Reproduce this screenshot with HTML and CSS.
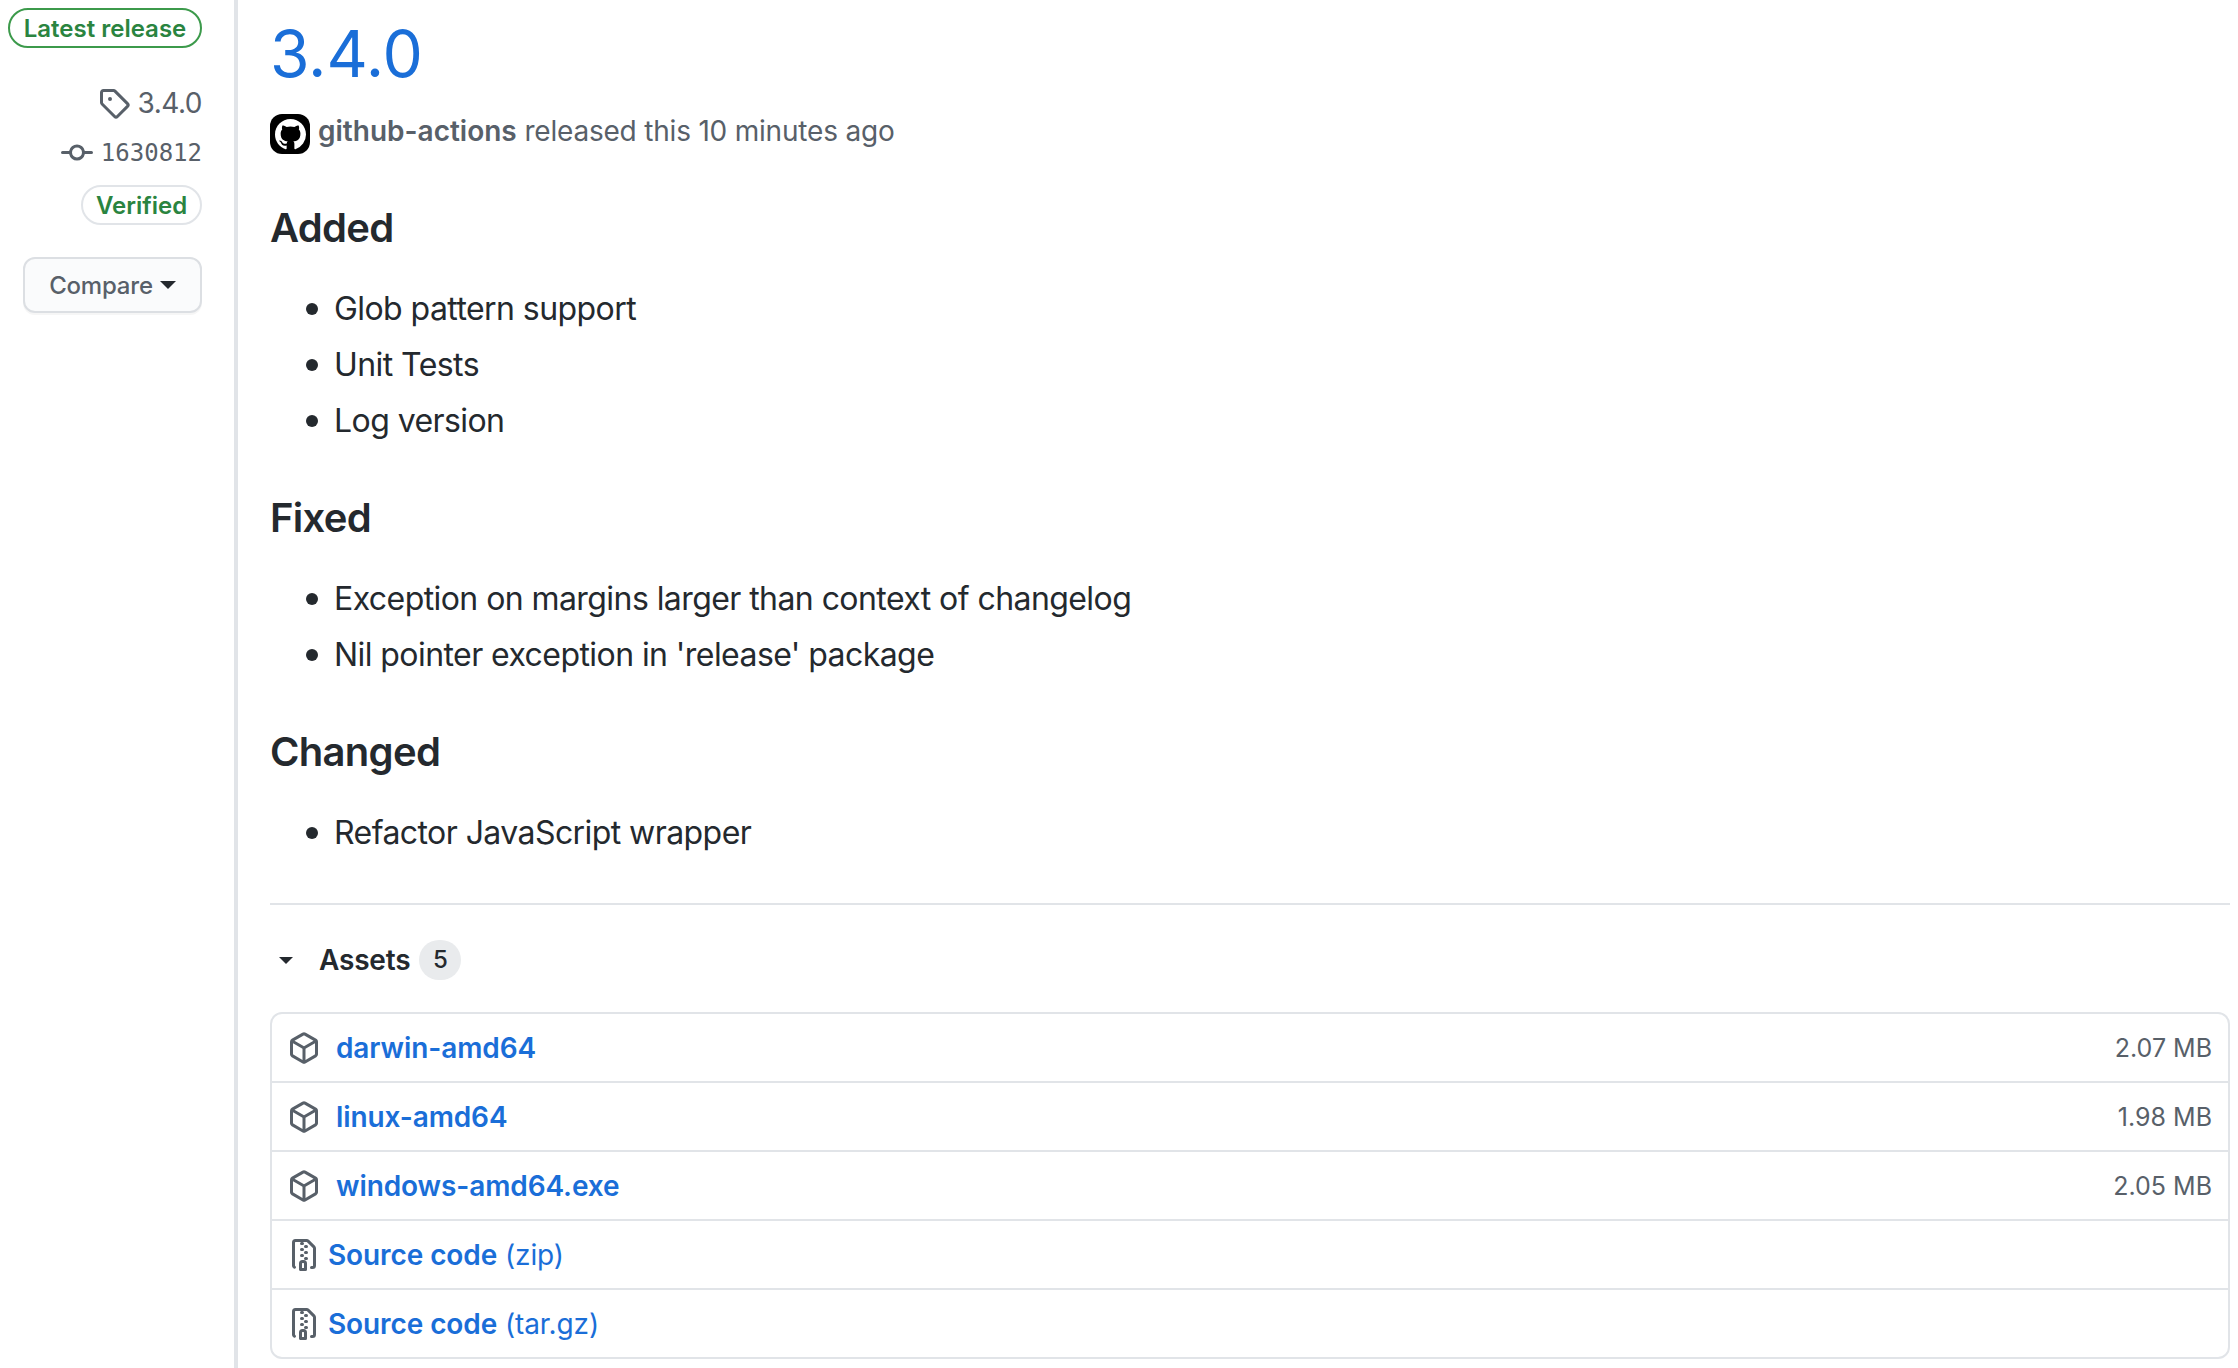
FILE: index.html
```html
<!DOCTYPE html>
<html lang="en">

<head>
  <meta charset="UTF-8" />
  <title>Release 3.4.0</title>
  <link rel="stylesheet" href="styles.css">
</head>

<body>
  <svg class="defs" width="0" height="0">
    <symbol id="i-tag" viewBox="0 0 16 16"><path fill-rule="evenodd" d="M2.5 7.775V2.75a.25.25 0 01.25-.25h5.025a.25.25 0 01.177.073l6.25 6.25a.25.25 0 010 .354l-5.025 5.025a.25.25 0 01-.354 0l-6.25-6.25a.25.25 0 01-.073-.177zm-1.5 0V2.75C1 1.784 1.784 1 2.75 1h5.025c.464 0 .91.184 1.238.513l6.25 6.25a1.75 1.75 0 010 2.474l-5.026 5.026a1.75 1.75 0 01-2.474 0l-6.25-6.25A1.75 1.75 0 011 7.775zM6 5a1 1 0 100 2 1 1 0 000-2z"/></symbol>
    <symbol id="i-commit" viewBox="0 0 16 16"><path fill-rule="evenodd" d="M10.5 7.75a2.5 2.5 0 11-5 0 2.5 2.5 0 015 0zm1.43.75a4.002 4.002 0 01-7.86 0H.75a.75.75 0 110-1.5h3.32a4.001 4.001 0 017.86 0h3.32a.75.75 0 110 1.5h-3.32z"/></symbol>
    <symbol id="i-package" viewBox="0 0 16 16"><path fill-rule="evenodd" d="M8.878.392a1.75 1.75 0 00-1.756 0l-5.25 3.045A1.75 1.75 0 001 4.951v6.098c0 .624.332 1.2.872 1.514l5.25 3.045a1.75 1.75 0 001.756 0l5.25-3.045c.54-.313.872-.89.872-1.514V4.951c0-.624-.332-1.2-.872-1.514L8.878.392zM7.875 1.69a.25.25 0 01.25 0l4.63 2.685L8 7.133 3.245 4.375l4.63-2.685zM2.5 5.677v5.372c0 .09.047.171.125.216l4.625 2.683V8.432L2.5 5.677zm6.25 8.271l4.625-2.683a.25.25 0 00.125-.216V5.677L8.75 8.432v5.516z"/></symbol>
    <symbol id="i-zip" viewBox="0 0 16 16"><path fill-rule="evenodd" d="M3.5 1.75a.25.25 0 01.25-.25h3a.75.75 0 000 1.5h.5a.75.75 0 000-1.5h2.086a.25.25 0 01.177.073l2.914 2.914a.25.25 0 01.073.177v8.586a.25.25 0 01-.25.25h-.5a.75.75 0 000 1.5h.5A1.75 1.75 0 0014 13.25V4.664c0-.464-.184-.909-.513-1.237L10.573.513A1.75 1.75 0 009.336 0H3.75A1.75 1.75 0 002 1.75v11.5c0 .649.353 1.214.874 1.515a.75.75 0 10.752-1.298.25.25 0 01-.126-.217V1.75zM8.75 3a.75.75 0 000 1.5h.5a.75.75 0 000-1.5h-.5zM6 5.25a.75.75 0 01.75-.75h.5a.75.75 0 010 1.5h-.5A.75.75 0 016 5.25zm2 1.5A.75.75 0 018.75 6h.5a.75.75 0 010 1.5h-.5A.75.75 0 018 6.75zm-1.25.75a.75.75 0 000 1.5h.5a.75.75 0 000-1.5h-.5zM8 9.75A.75.75 0 018.75 9h.5a.75.75 0 010 1.5h-.5A.75.75 0 018 9.75zm-.75.75a1.75 1.75 0 00-1.75 1.75v3c0 .414.336.75.75.75h2.5a.75.75 0 00.75-.75v-3a1.75 1.75 0 00-1.75-1.75h-.5zM7 12.25a.25.25 0 01.25-.25h.5a.25.25 0 01.25.25v2.25H7v-2.25z"/></symbol>
  </svg>

  <div class="release">
    <aside class="sidebar">
      <span class="label-latest">Latest release</span>
      <div class="meta-tag">
        <svg class="icon icon-tag"><use href="#i-tag"></use></svg>
        <span>3.4.0</span>
      </div>
      <div class="meta-commit">
        <svg class="icon icon-commit"><use href="#i-commit"></use></svg>
        <span>1630812</span>
      </div>
      <span class="label-verified">Verified</span>
      <button class="btn-compare">Compare<span class="caret"></span></button>
    </aside>

    <main class="content">
      <h1 class="title">3.4.0</h1>
      <div class="byline">
        <span class="avatar">
          <svg viewBox="0 0 16 16"><path fill-rule="evenodd" d="M8 0C3.58 0 0 3.58 0 8c0 3.54 2.29 6.53 5.47 7.59.4.07.55-.17.55-.38 0-.19-.01-.82-.01-1.49-2.01.37-2.53-.49-2.69-.94-.09-.23-.48-.94-.82-1.13-.28-.15-.68-.52-.01-.53.63-.01 1.08.58 1.23.82.72 1.21 1.87.87 2.33.66.07-.52.28-.87.51-1.07-1.78-.2-3.64-.89-3.64-3.95 0-.87.31-1.59.82-2.15-.08-.2-.36-1.02.08-2.12 0 0 .67-.21 2.2.82.64-.18 1.32-.27 2-.27.68 0 1.36.09 2 .27 1.53-1.04 2.2-.82 2.2-.82.44 1.1.16 1.92.08 2.12.51.56.82 1.27.82 2.15 0 3.07-1.87 3.75-3.65 3.95.29.25.54.73.54 1.48 0 1.07-.01 1.93-.01 2.2 0 .21.15.46.55.38A8.013 8.013 0 0016 8c0-4.42-3.58-8-8-8z"/></svg>
        </span>
        <span class="byline-text"><strong>github-actions</strong> released this 10 minutes ago</span>
      </div>

      <div class="notes">
        <h3>Added</h3>
        <ul>
          <li>Glob pattern support</li>
          <li>Unit Tests</li>
          <li>Log version</li>
        </ul>
        <h3>Fixed</h3>
        <ul>
          <li>Exception on margins larger than context of changelog</li>
          <li>Nil pointer exception in 'release' package</li>
        </ul>
        <h3>Changed</h3>
        <ul>
          <li>Refactor JavaScript wrapper</li>
        </ul>
      </div>

      <hr class="divider">

      <div class="assets-head">
        <span class="caret caret-dark"></span>
        <strong>Assets</strong>
        <span class="counter">5</span>
      </div>

      <div class="assets">
        <div class="asset">
          <svg class="icon icon-asset"><use href="#i-package"></use></svg>
          <a class="asset-name" href="#">darwin-amd64</a>
          <span class="asset-size">2.07 MB</span>
        </div>
        <div class="asset">
          <svg class="icon icon-asset"><use href="#i-package"></use></svg>
          <a class="asset-name" href="#">linux-amd64</a>
          <span class="asset-size">1.98 MB</span>
        </div>
        <div class="asset">
          <svg class="icon icon-asset"><use href="#i-package"></use></svg>
          <a class="asset-name" href="#">windows-amd64.exe</a>
          <span class="asset-size">2.05 MB</span>
        </div>
        <div class="asset">
          <svg class="icon icon-asset"><use href="#i-zip"></use></svg>
          <a class="asset-source" href="#"><strong>Source code</strong> (zip)</a>
        </div>
        <div class="asset">
          <svg class="icon icon-asset"><use href="#i-zip"></use></svg>
          <a class="asset-source" href="#"><strong>Source code</strong> (tar.gz)</a>
        </div>
      </div>
    </main>
  </div>
</body>

</html>
```

FILE: styles.css
```css
* {
  margin: 0;
  padding: 0;
  box-sizing: border-box;
}

body {
  font-family: 'Inter', sans-serif;
  background: #fff;
  color: #24292e;
  height: 1368px;
  overflow: hidden;
}

.defs {
  display: block;
  height: 0;
}

.release {
  display: flex;
  height: 1368px;
}

.icon {
  fill: #586069;
  flex: none;
}

/* Sidebar */
.sidebar {
  width: 238px;
  flex: none;
  border-right: 4px solid #e1e4e8;
  display: flex;
  flex-direction: column;
  align-items: flex-end;
  padding: 8px 32px 0 8px;
  color: #586069;
}

.label-latest {
  width: 194px;
  height: 40px;
  border: 2px solid #3c9a4b;
  border-radius: 20px;
  color: #2a8440;
  font-size: 24px;
  font-weight: 600;
  line-height: 37px;
  text-align: center;
}

.meta-tag {
  display: flex;
  align-items: center;
  gap: 8px;
  margin-top: 37px;
  height: 36px;
  font-size: 28px;
  letter-spacing: -0.5px;
}

.icon-tag {
  width: 32px;
  height: 32px;
}

.meta-commit {
  display: flex;
  align-items: center;
  gap: 8px;
  margin-top: 14px;
  height: 36px;
  font-family: 'DejaVu Sans Mono', monospace;
  font-size: 24px;
}

.icon-commit {
  width: 32px;
  height: 32px;
}

.label-verified {
  width: 121px;
  height: 40px;
  margin-top: 14px;
  border: 2px solid #e1e4e8;
  border-radius: 20px;
  color: #2a8440;
  font-size: 24px;
  font-weight: 600;
  line-height: 37px;
  text-align: center;
}

.btn-compare {
  display: flex;
  align-items: center;
  justify-content: center;
  gap: 7px;
  width: 179px;
  height: 56px;
  margin-top: 32px;
  background: #fafbfc;
  border: 2px solid #dcdfe3;
  border-radius: 12px;
  box-shadow: 0 2px 0 rgba(27, 31, 35, 0.04);
  color: #586069;
  font-family: inherit;
  font-size: 24px;
  font-weight: 500;
  letter-spacing: -0.2px;
}

.caret {
  width: 0;
  height: 0;
  border-top: 8px solid #24292e;
  border-left: 8px solid transparent;
  border-right: 8px solid transparent;
}

/* Main column */
.content {
  flex: 1;
  padding-left: 32px;
  padding-right: 8px;
  min-width: 0;
}

.title {
  font-size: 64px;
  font-weight: 400;
  line-height: 80px;
  margin-top: 14px;
  color: #1a6ed8;
}

.byline {
  display: flex;
  align-items: flex-start;
  gap: 8px;
  margin-top: 20px;
  height: 40px;
  font-size: 28px;
  color: #586069;
}

.byline-text {
  line-height: 35px;
  letter-spacing: -0.2px;
}

.byline strong {
  font-weight: 600;
  letter-spacing: 0;
}

.avatar {
  display: flex;
  align-items: center;
  justify-content: center;
  width: 40px;
  height: 40px;
  background: #000;
  border-radius: 12px;
}

.avatar svg {
  width: 31px;
  height: 31px;
  fill: #fff;
}

.notes {
  padding-top: 1px;
}

.notes h3 {
  font-size: 40px;
  font-weight: 600;
  line-height: 50px;
  letter-spacing: -0.7px;
  margin-top: 48px;
  margin-bottom: 32px;
}

.notes ul {
  list-style: none;
  padding-left: 36px;
  font-size: 32px;
  line-height: 48px;
  letter-spacing: -0.57px;
}

.notes li {
  display: flex;
  align-items: center;
}

.notes li::before {
  content: '';
  width: 12px;
  height: 12px;
  margin-right: 16px;
  background: #24292e;
  border-radius: 50%;
}

.notes li + li {
  margin-top: 8px;
}

.divider {
  border: none;
  height: 2px;
  background: #e1e4e8;
  margin-top: 46px;
}

.assets-head {
  display: flex;
  align-items: center;
  margin-top: 35px;
  height: 40px;
  padding-left: 9px;
  font-size: 28px;
}

.assets-head strong {
  font-weight: 600;
  margin-left: 26px;
  letter-spacing: -0.2px;
}

.caret-dark {
  border-top-width: 7px;
  border-left-width: 7px;
  border-right-width: 7px;
}

.counter {
  width: 42px;
  height: 40px;
  margin-left: 9px;
  background: #e9ebed;
  border-radius: 20px;
  font-size: 24px;
  font-weight: 500;
  line-height: 40px;
  text-align: center;
}

.assets {
  margin-top: 32px;
  border: 2px solid #e1e4e8;
  border-radius: 12px;
}

.asset {
  display: flex;
  align-items: center;
  height: 69px;
  padding: 0 16px;
  border-bottom: 2px solid #e1e4e8;
}

.asset:last-child {
  height: 67px;
  border-bottom: none;
}

.icon-asset {
  width: 32px;
  height: 32px;
}

.asset-name,
.asset-source {
  color: #1a6ed8;
  font-size: 28px;
  letter-spacing: -0.1px;
  text-decoration: none;
}

.asset-name {
  font-weight: 600;
  margin-left: 16px;
}

.asset-source {
  margin-left: 8px;
}

.asset-source strong {
  font-weight: 600;
}

.asset-size {
  margin-left: auto;
  font-size: 25px;
  color: #586069;
}
```
